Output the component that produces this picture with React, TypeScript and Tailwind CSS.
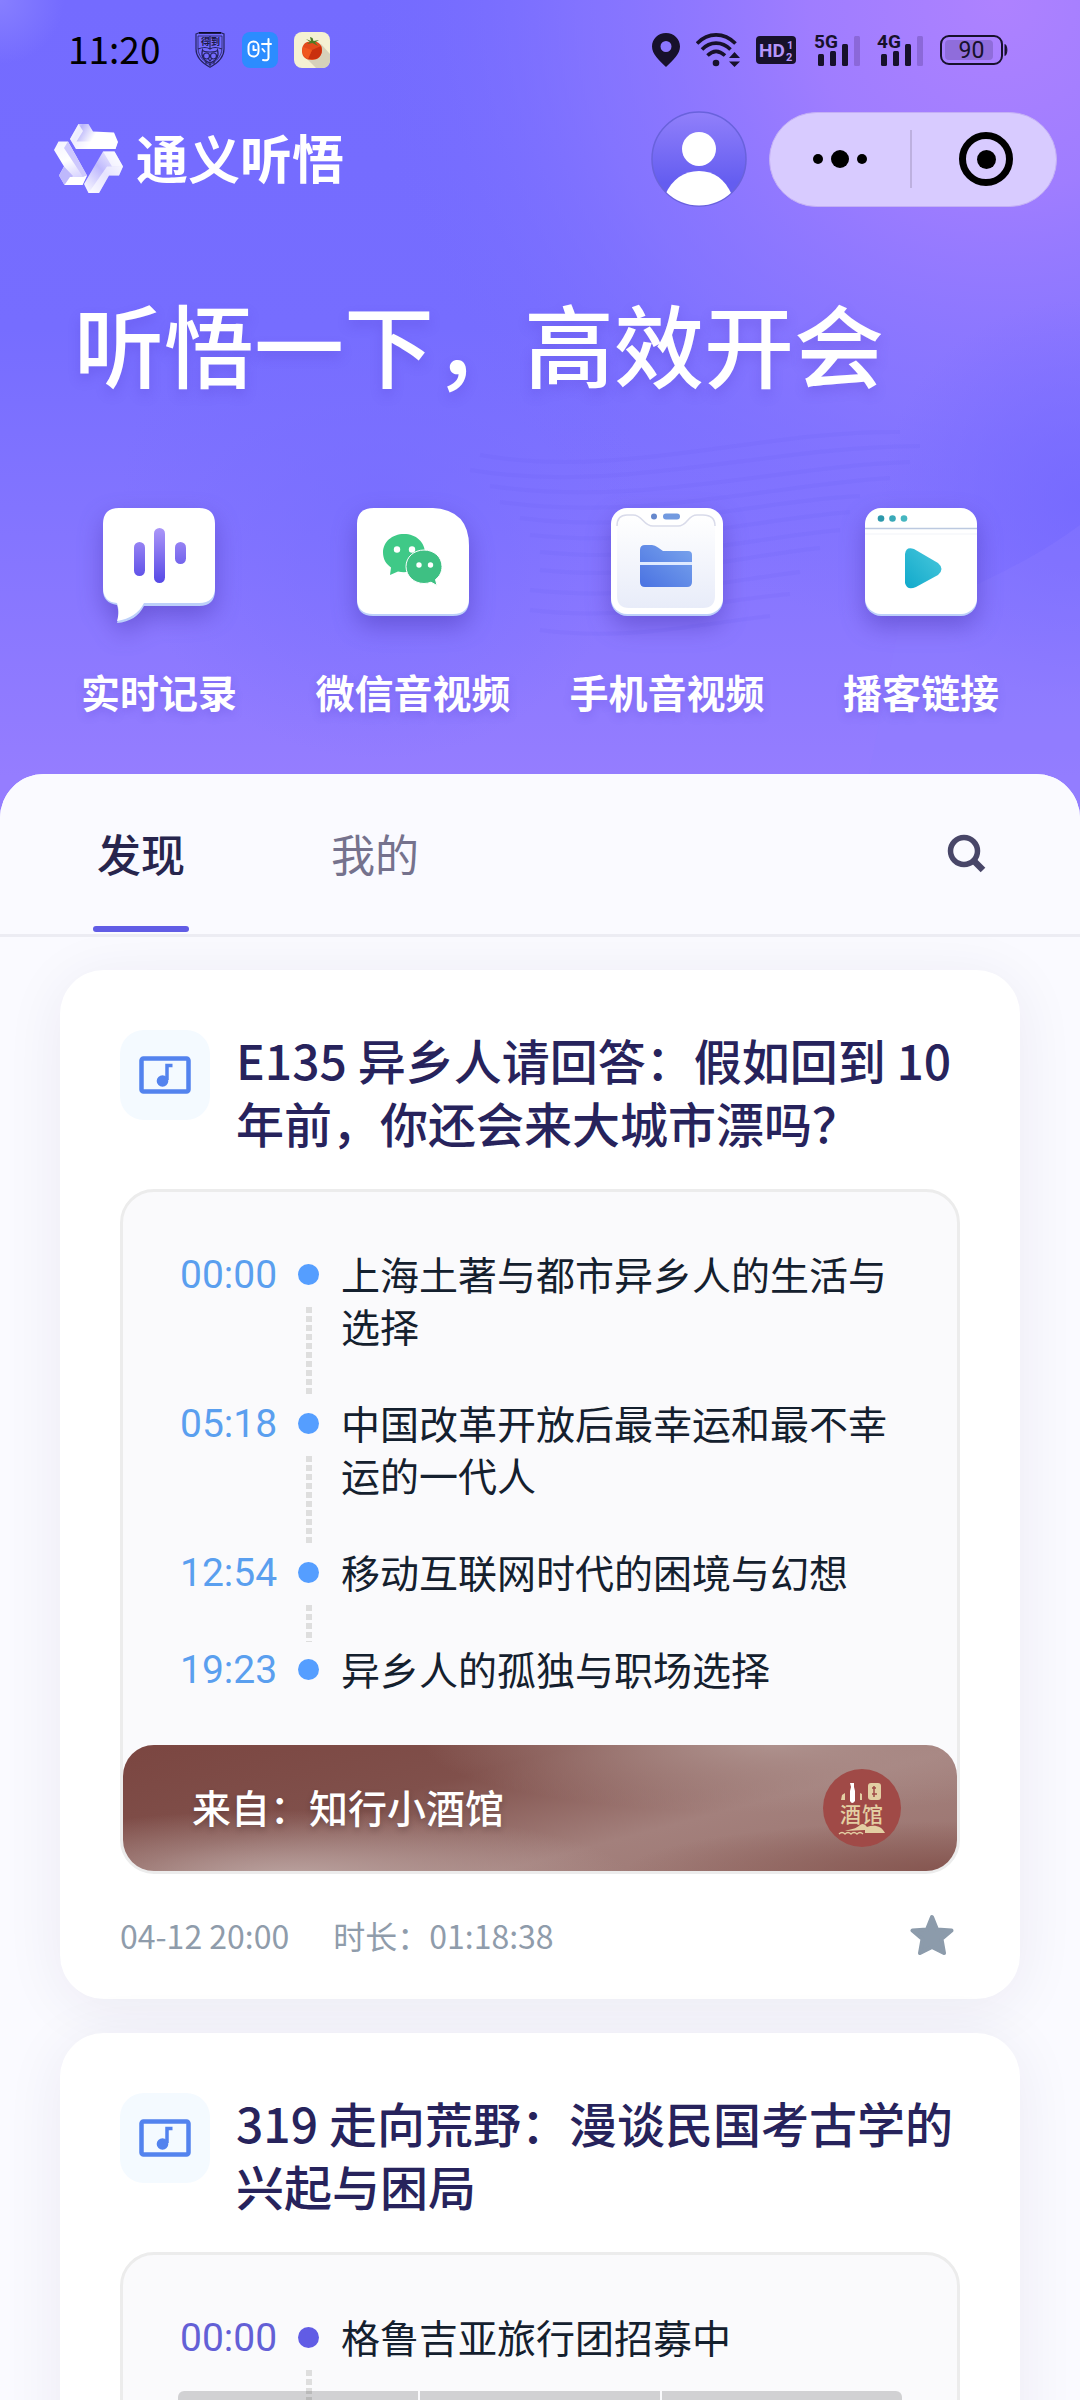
import React, { useState } from 'react';

interface Chapter {
  time: string;
  title: string;
}

interface Episode {
  id: string;
  title: string;
  accent: 'blue' | 'violet';
  chapters: Chapter[];
  source?: string;
  date?: string;
  duration?: string;
}

const episodes: Episode[] = [
  {
    id: 'e135',
    title: 'E135 异乡人请回答：假如回到 10 年前，你还会来大城市漂吗？',
    accent: 'blue',
    chapters: [
      { time: '00:00', title: '上海土著与都市异乡人的生活与选择' },
      { time: '05:18', title: '中国改革开放后最幸运和最不幸运的一代人' },
      { time: '12:54', title: '移动互联网时代的困境与幻想' },
      { time: '19:23', title: '异乡人的孤独与职场选择' },
    ],
    source: '知行小酒馆',
    date: '04-12 20:00',
    duration: '01:18:38',
  },
  {
    id: 'e319',
    title: '319 走向荒野：漫谈民国考古学的兴起与困局',
    accent: 'violet',
    chapters: [{ time: '00:00', title: '格鲁吉亚旅行团招募中' }],
  },
];

const accents = {
  blue: { text: 'text-[#5a9fef]', dot: 'bg-[#559eff]' },
  violet: { text: 'text-[#6360d6]', dot: 'bg-[#615ce5]' },
};

function ShieldIcon() {
  return (
    <svg viewBox="0 0 32 36" className="h-9 w-8" fill="none" stroke="#25235f" strokeWidth="1.2">
      <path d="M2 2 L5 .8 H27 L30 2 V17 C30 27 22 32 16 35.2 C10 32 2 27 2 17 Z" />
      <path d="M4 4 H28 V16 C28 25 21 30 16 32.8 C11 30 4 25 4 16 Z" strokeWidth=".8" />
      <path d="M5 .8 H27" stroke="#0c0b2a" strokeWidth="1.8" />
      <path d="M4 17 C9 15 13 15 16 17 C19 15 23 15 28 17 M16 4 V17" />
      <text x="7" y="13" fontSize="9" fontWeight="700" fill="#1b1947" stroke="none" fontFamily="Noto Sans CJK SC">得</text>
      <text x="17" y="13" fontSize="9" fontWeight="700" fill="#1b1947" stroke="none" fontFamily="Noto Sans CJK SC">到</text>
      <path d="M8.500 18 C9 20 12 20 16 20 C20 20 23 20 23.500 18 C25 23 24 28 16 31 C8 28 7 23 8.500 18 Z" />
      <circle cx="12.500" cy="24" r="3" />
      <circle cx="19.500" cy="24" r="3" />
      <path d="M14.500 27 L16 29 L17.500 27 M12 29 V32 M16 30 V34 M20 29 V32" />
    </svg>
  );
}

function ClockAppIcon() {
  return (
    <svg viewBox="0 0 36 36" className="size-9" fill="none" stroke="#fff" strokeWidth="2" strokeLinecap="round" strokeLinejoin="round">
      <rect width="36" height="36" rx="8" fill="#2c8cff" stroke="none" />
      <rect x="6.500" y="9.500" width="10" height="15" rx="5" />
      <path d="M11.500 14 V18 H14 M20 12 H29 M26.500 7 V26 C26.500 28 25 28.500 21 28 M20.500 17 L22.500 19.500" />
    </svg>
  );
}

function TomatoIcon() {
  return (
    <svg viewBox="0 0 36 36" className="size-9">
      <rect width="36" height="36" rx="8" fill="#f5f1d3" />
      <path d="M27 12 L36 22 V28 C36 33 33 36 28 36 H22 L11 25 Z" fill="#d6d1ba" />
      <path d="M8 19 C8 12 12 9 18 9.500 C24 9 28 12 28 18 C28 24 24 28 18 28 C12 28 8 25 8 19 Z" fill="#e24a1b" />
      <path d="M18 18 L27 14 C29 20 27 25 22 27 L14 27 Z" fill="#c9300f" />
      <path d="M9 15 L18 18 L14 27 C10 25 7 20 9 15 Z" fill="#f0571f" />
      <path d="M12 7 L17 9 L16 5 L18.500 6 L19.500 9 L25 8 L21 10.500 L24 14 L18.500 11 L13 12 L16 10 Z" fill="#4c7a24" />
    </svg>
  );
}

function PinIcon() {
  return (
    <svg viewBox="0 0 28 34" className="h-[34px] w-7">
      <path fillRule="evenodd" d="M14 0 C6 0 0 6 0 13.500 C0 21 7 27 14 34 C21 27 28 21 28 13.500 C28 6 22 0 14 0 Z M14 8 A5.500 5.500 0 1 1 14 19 A5.500 5.500 0 1 1 14 8 Z" fill="#17112b" />
    </svg>
  );
}

function WifiIcon() {
  return (
    <svg viewBox="0 0 44 34" className="h-[34px] w-11" fill="none" stroke="#17112b" strokeWidth="3.600">
      <path d="M1 10.500 C12 -1 28 -1 39.500 10.500" />
      <path d="M6 16.500 C14 8 26 8 34.500 16.500" />
      <path d="M11.500 22.500 C17 17 23 17 29 22.500" />
      <circle cx="20" cy="30" r="3.300" fill="#17112b" stroke="none" />
      <path d="M33 25 L38.500 19 L44 25 Z M33 28.500 L38.500 34 L44 28.500 Z" fill="#17112b" stroke="none" />
    </svg>
  );
}

function HdIcon() {
  return (
    <svg viewBox="0 0 42 28" className="h-7 w-[42px]" fontFamily="Roboto" fontWeight="700" fill="#b596fa">
      <rect width="40" height="28" rx="4" fill="#17112b" />
      <text x="3" y="21" fontSize="19">HD</text>
      <text x="31" y="13" fontSize="11">1</text>
      <text x="30" y="25" fontSize="11">2</text>
    </svg>
  );
}

function SignalIcon({ label }: { label: string }) {
  return (
    <svg viewBox="0 -4 47 42" className="h-[42px] w-[47px]" fill="#17112b">
      <text x="0" y="15" fontSize="19" fontWeight="700" fontFamily="Roboto">{label}</text>
      <rect x="4" y="21" width="6" height="12" rx="1.500" />
      <rect x="16" y="18" width="6" height="15" rx="1.500" />
      <rect x="28" y="11" width="6" height="22" rx="1.500" />
      <rect x="40" y="3" width="6" height="30" rx="1.500" fill="#8b68d9" />
    </svg>
  );
}

function BatteryIcon() {
  return (
    <svg viewBox="0 0 68 30" className="h-[30px] w-[68px]">
      <rect x="1" y="1" width="61" height="28" rx="8" fill="none" stroke="#17112b" strokeWidth="2" />
      <rect x="5" y="5" width="48" height="20" rx="4" fill="#8f6ddb" />
      <path d="M65 9.500 C67.500 11 67.500 19 65 20.500 Z" fill="#17112b" stroke="#17112b" />
      <text x="31.500" y="23" fontSize="23" textAnchor="middle" fill="#17112b" fontFamily="Roboto">90</text>
    </svg>
  );
}

function BrandLogo() {
  return (
    <svg viewBox="0 0 70 70" className="size-[70px]">
      <defs>
        <linearGradient id="faceTop" x1="0" y1="0" x2="1" y2=".3">
          <stop offset="0" stopColor="#fff" />
          <stop offset=".25" stopColor="#b9b4fb" />
          <stop offset=".6" stopColor="#fff" />
        </linearGradient>
        <linearGradient id="faceLeft" x1="0" y1="0" x2=".3" y2="1">
          <stop offset="0" stopColor="#f4f3ff" />
          <stop offset=".5" stopColor="#fff" />
          <stop offset="1" stopColor="#d4d0ff" />
        </linearGradient>
        <linearGradient id="faceRight" x1="1" y1="0" x2="0" y2="1">
          <stop offset="0" stopColor="#fff" />
          <stop offset=".5" stopColor="#bfb9fd" />
          <stop offset="1" stopColor="#fff" />
        </linearGradient>
      </defs>
      <path d="M24.500 0 H34.500 L39 7.500 L60 8.500 L64 18 L61.500 25 H22 L16 15 Z" fill="url(#faceTop)" />
      <path d="M16 15 L24.500 0 L29 7 L22.500 17.500 H63.500 L61.500 25 H22 Z" fill="#fff" fillOpacity=".75" />
      <path d="M4.500 17.500 H14 L33 51.500 L28.500 61 H10.500 L5 51.500 L10 42.500 L0 26 Z" fill="url(#faceLeft)" />
      <path d="M14 17.500 L33 51.500 L29 53 L10 24 Z" fill="#cdc8fe" />
      <path d="M10 42.500 L19 52 L10.500 61 L5 51.500 Z" fill="#beb8fc" />
      <path d="M16 53 H29 L33 51.500 L28.500 61 H10.500 Z" fill="#fff" />
      <path d="M49 27.500 H60.500 L69 42.500 L65 51.500 H55 L45 69 H34.500 L30 60 Z" fill="url(#faceRight)" />
      <path d="M60.500 27.500 L69 42.500 H58 L49 27.500 Z" fill="#fff" fillOpacity=".7" />
      <path d="M69 42.500 L65 51.500 H55 L45 69 H34.500 L53 42.500 Z" fill="#fff" fillOpacity=".6" />
    </svg>
  );
}

function AvatarIcon() {
  return (
    <svg viewBox="0 0 96 96" className="size-24">
      <defs>
        <linearGradient id="avatarBg" x1="0" y1="0" x2="0" y2="1">
          <stop offset="0" stopColor="#9180fb" />
          <stop offset=".75" stopColor="#645df0" />
        </linearGradient>
        <clipPath id="avatarClip">
          <circle cx="48" cy="48" r="46.500" />
        </clipPath>
      </defs>
      <circle cx="48" cy="48" r="47" fill="url(#avatarBg)" stroke="#6962dc" strokeWidth="1.500" />
      <circle cx="48" cy="38" r="17" fill="#fff" />
      <path d="M14 84 C21 68 33 60 48 60 C63 60 74 68 81 84 V100 H14 Z" fill="#fff" clipPath="url(#avatarClip)" />
    </svg>
  );
}

const tileShadow = 'overflow-visible drop-shadow-[0_10px_12px_rgba(60,40,160,0.4)]';

function RecordTile() {
  return (
    <svg viewBox="0 0 112 120" className={`h-[120px] w-28 ${tileShadow}`}>
      <defs>
        <linearGradient id="bars" gradientUnits="userSpaceOnUse" x1="0" y1="20" x2="0" y2="76">
          <stop offset="0" stopColor="#ab96f8" />
          <stop offset="1" stopColor="#5548e6" />
        </linearGradient>
      </defs>
      <path d="M16 3 H96 Q112 3 112 19 V82 Q112 98 96 98 H41 C36 108 27 114 14 115 C16 109 16 104 14 97 Q0 95 0 82 V19 Q0 3 16 3 Z" fill="#bdd0fa" />
      <path d="M16 0 H96 Q112 0 112 16 V79 Q112 95 96 95 H41 C36 105 27 111 14 113 C16 106 16 101 14 95 Q0 94 0 79 V16 Q0 0 16 0 Z" fill="#fff" />
      <g fill="url(#bars)">
        <rect x="31" y="34" width="11" height="34" rx="5.500" />
        <rect x="51" y="20" width="11" height="55" rx="5.500" />
        <rect x="72" y="34" width="11" height="22" rx="5.500" />
      </g>
    </svg>
  );
}

function WechatTile() {
  return (
    <svg viewBox="0 0 112 120" className={`h-[120px] w-28 ${tileShadow}`}>
      <path d="M17 3 H76 Q112 5 112 42 V92 Q112 108 96 108 H16 Q0 108 0 92 V19 Q0 3 17 3 Z" fill="#bdd0fa" />
      <path d="M17 0 H76 Q112 2 112 38 V90 Q112 106 96 106 H16 Q0 106 0 90 V16 Q0 0 17 0 Z" fill="#fff" />
      <path d="M47 26 C35 26 26 34 26 44.500 C26 51 29 56 34 59.500 L33 67 L41 63.500 C43 64 45 64.200 47 64.200 C59 64 68 55 68 45 C68 34 59 26 47 26 Z" fill="#3fc987" />
      <path d="M67 42 C57 42 49 49 49 58.500 C49 68 57 75.500 67 75.500 C69.500 75.500 72 75 74 74.200 L80 77.500 L78.500 71.500 C82.500 68.500 85 64 85 58.500 C85 49 77 42 67 42 Z" fill="#3ec083" stroke="#fff" strokeWidth="1" />
      <g fill="#fff">
        <circle cx="40" cy="41.500" r="3.200" />
        <circle cx="55" cy="41.500" r="3.200" />
        <circle cx="62" cy="57" r="2.700" />
        <circle cx="73.500" cy="57" r="2.700" />
      </g>
    </svg>
  );
}

function PhoneTile() {
  return (
    <svg viewBox="0 0 112 120" className={`h-[120px] w-28 ${tileShadow}`}>
      <defs>
        <linearGradient id="phoneScreen" x1="0" y1="0" x2="0" y2="1">
          <stop offset="0" stopColor="#fff" />
          <stop offset="1" stopColor="#e8ecf9" />
        </linearGradient>
        <linearGradient id="folder" x1="0" y1="1" x2="1" y2="0">
          <stop offset="0" stopColor="#4a72e2" />
          <stop offset="1" stopColor="#79a4ec" />
        </linearGradient>
      </defs>
      <rect y="3" width="112" height="105" rx="16" fill="#bdd0fa" />
      <rect width="112" height="106" rx="16" fill="#fff" />
      <path d="M16 7 H22 C32 7 32 18 42 18 H67 C77 18 76 7 86 7 H92 Q104 7 104 19 V88 Q104 100 92 100 H18 Q6 100 6 88 V18 Q6 7 16 7 Z" fill="url(#phoneScreen)" />
      <path d="M6 18 Q6 7 16 7 H22 C32 7 32 18 42 18 H67 C77 18 76 7 86 7 H92 Q104 7 104 18" fill="none" stroke="#d9dbea" strokeWidth="1.500" />
      <circle cx="43" cy="8.500" r="3" fill="#6688cc" />
      <rect x="52" y="5.500" width="17" height="6" rx="3" fill="#729ae0" />
      <path d="M29 42 Q29 37 34 37 H41 Q44 37 47 39.500 L52 43 H77 Q81 43 81 47 V74 Q81 79 76 79 H34 Q29 79 29 74 Z" fill="url(#folder)" />
      <rect x="29" y="54" width="52" height="3" fill="#dfeaff" />
    </svg>
  );
}

function PodcastTile() {
  return (
    <svg viewBox="0 0 112 120" className={`h-[120px] w-28 ${tileShadow}`}>
      <defs>
        <linearGradient id="play" x1="0" y1="1" x2="1" y2="0">
          <stop offset="0" stopColor="#10a9cb" />
          <stop offset="1" stopColor="#4bc8dc" />
        </linearGradient>
      </defs>
      <rect y="3" width="112" height="105" rx="16" fill="#bdd0fa" />
      <rect width="112" height="106" rx="16" fill="#fff" />
      <path d="M0 20.500 H112" stroke="#bcc9e0" strokeWidth="1.500" />
      <path d="M0 26 H112" stroke="#f1f3f8" strokeWidth="1" />
      <circle cx="16" cy="10.500" r="3.300" fill="#2c98ab" />
      <circle cx="27.500" cy="10.500" r="3.300" fill="#39a9b8" />
      <circle cx="39" cy="10.500" r="3.300" fill="#45b6c0" />
      <path d="M40 46 Q41 38 49 41 L73 55 Q80 61 73 67 L51 79 Q42 83 40 75 Z" fill="url(#play)" />
    </svg>
  );
}

function MusicIcon() {
  return (
    <svg viewBox="0 0 52 38" className="h-[38px] w-[52px]" fill="none">
      <rect x="2.500" y="2.500" width="47" height="33" rx="2" stroke="#5383ee" strokeWidth="4.500" />
      <path d="M33.500 9.500 H28 V24" stroke="#5383ee" strokeWidth="3.500" />
      <circle cx="23.500" cy="25" r="5.800" fill="#5383ee" />
    </svg>
  );
}

function TavernLogo() {
  return (
    <svg viewBox="0 0 78 78" className="size-[78px]" fill="#e3cfa3">
      <circle cx="39" cy="39" r="39" fill="#a04a47" />
      <path d="M27 14 H31 V18 L32 22 V32 Q29 36 27 32 V22 L28 18 Z" fill="#fff" />
      <path d="M19 26 L22 24 V31 H18 Z M37 24 L39 25 V31 H37 Z" />
      <rect x="45" y="14" width="13" height="17" rx="3" />
      <path d="M49 19 H53 M49 25 H54 M51 17 V28" stroke="#a04a47" strokeWidth="1.500" />
      <text x="17" y="53" fontSize="21" fontWeight="500" fontFamily="Noto Sans CJK SC">酒</text>
      <text x="39" y="53" fontSize="21" fontWeight="500" fontFamily="Noto Sans CJK SC">馆</text>
      <path d="M22 62 C28 60 33 60 37 56 Q41 53 44 58 C51 55 59 57 62 64 H42 V61 Z" />
      <path d="M16 65 Q19 62 22 65 Q25 62 28 65 Q31 62 34 65 Q37 62 40 65" fill="none" stroke="#e3cfa3" strokeWidth="1.300" />
    </svg>
  );
}

function HeroBackground() {
  return (
    <svg className="absolute inset-0 size-full" viewBox="0 0 1080 818" preserveAspectRatio="none" aria-hidden="true">
      <defs>
        <linearGradient id="heroBase" x1="0" y1="0" x2="0" y2="1">
          <stop offset="0" stopColor="#746bff" />
          <stop offset=".4" stopColor="#766dff" />
          <stop offset=".62" stopColor="#8274ff" />
          <stop offset=".95" stopColor="#957dff" />
        </linearGradient>
        <radialGradient id="heroTopRight" gradientUnits="userSpaceOnUse" cx="1000" cy="0" r="640">
          <stop offset="0" stopColor="#ae82ff" />
          <stop offset=".3" stopColor="#a47fff" stopOpacity=".9" />
          <stop offset=".65" stopColor="#8d79ff" stopOpacity=".6" />
          <stop offset="1" stopColor="#766dff" stopOpacity="0" />
        </radialGradient>
        <radialGradient id="heroMid" gradientUnits="userSpaceOnUse" cx="380" cy="500" r="260">
          <stop offset="0" stopColor="#766dff" stopOpacity=".7" />
          <stop offset="1" stopColor="#766dff" stopOpacity="0" />
        </radialGradient>
        <radialGradient id="heroRight" gradientUnits="userSpaceOnUse" cx="1080" cy="500" r="200">
          <stop offset="0" stopColor="#7468ff" stopOpacity=".8" />
          <stop offset="1" stopColor="#7468ff" stopOpacity="0" />
        </radialGradient>
        <radialGradient id="heroCorner" gradientUnits="userSpaceOnUse" cx="0" cy="0" r="64">
          <stop offset="0" stopColor="#877fff" />
          <stop offset="1" stopColor="#877fff" stopOpacity="0" />
        </radialGradient>
      </defs>
      <rect width="1080" height="818" fill="url(#heroBase)" />
      <rect width="1080" height="818" fill="url(#heroTopRight)" />
      <rect width="1080" height="818" fill="url(#heroMid)" />
      <rect width="1080" height="818" fill="url(#heroRight)" />
      <rect width="80" height="80" fill="url(#heroCorner)" />
      <path d="M1080 525 C1040 555 990 580 900 620 L860 818 H1080 Z" fill="#8f7dff" fillOpacity=".3" />
      <g fill="none" stroke="#6458f0" strokeOpacity=".1" strokeWidth="4">
        <path d="M480 455 C620 480 760 430 900 432" />
        <path d="M470 470 C620 495 760 447 920 446" />
        <path d="M490 486 C640 508 780 466 910 462" />
        <path d="M500 502 C640 522 780 484 890 478" />
        <path d="M520 518 C650 535 760 500 860 496" />
        <path d="M530 535 C660 548 750 520 850 512" />
        <path d="M540 552 C660 564 750 538 840 530" />
        <path d="M540 570 C650 582 740 556 820 548" />
        <path d="M530 590 C640 602 730 580 800 572" />
        <path d="M530 610 C630 622 720 600 790 594" />
        <path d="M540 630 C630 642 710 622 770 616" />
      </g>
    </svg>
  );
}

const shortcuts = [
  { label: '实时记录', Icon: RecordTile },
  { label: '微信音视频', Icon: WechatTile },
  { label: '手机音视频', Icon: PhoneTile },
  { label: '播客链接', Icon: PodcastTile },
];

function StatusBar() {
  return (
    <div className="flex h-9 items-center pr-[72px] pl-[68px]">
      <time className="mr-[34px] pb-1 text-[37px] leading-9 text-black">11:20</time>
      <div className="flex items-center gap-4">
        <ShieldIcon />
        <ClockAppIcon />
        <TomatoIcon />
      </div>
      <div className="ml-auto flex items-center gap-4">
        <PinIcon />
        <WifiIcon />
        <HdIcon />
        <SignalIcon label="5G" />
        <SignalIcon label="4G" />
        <BatteryIcon />
      </div>
    </div>
  );
}

function Header() {
  return (
    <header className="relative shrink-0 pt-8 pb-[101px] text-white">
      <HeroBackground />
      <div className="relative">
        <StatusBar />
        <div className="mt-[43px] flex h-24 items-center pr-[23px] pl-[54px]">
          <BrandLogo />
          <span className="ml-3 pb-1 text-[52px] leading-none font-bold">通义听悟</span>
          <button className="ml-auto rounded-full" aria-label="个人中心">
            <AvatarIcon />
          </button>
          <div className="ml-[22px] flex h-[95px] w-72 items-center rounded-full border border-[#c4b0f5] bg-[#d8cbff]">
            <button className="flex flex-1 items-center justify-center gap-2" aria-label="更多">
              <span className="size-2.5 rounded-full bg-black" />
              <span className="size-[18px] rounded-full bg-black" />
              <span className="size-2.5 rounded-full bg-black" />
            </button>
            <span className="h-[58px] w-0.5 bg-[#bdb0df]" />
            <button className="flex flex-1 items-center justify-center pl-1" aria-label="关闭">
              <span className="flex size-[54px] items-center justify-center rounded-full border-[7px] border-black">
                <span className="size-[19px] rounded-full bg-black" />
              </span>
            </button>
          </div>
        </div>

        <h1 className="mt-[81px] pl-[74px] text-[90px] leading-[108px] font-medium [text-shadow:0_6px_12px_rgba(80,60,200,0.25)]">
          听悟一下，高效开会
        </h1>

        <nav className="mt-28 grid grid-cols-4 px-8">
          {shortcuts.map(({ label, Icon }) => (
            <button key={label} className="flex flex-col items-center">
              <Icon />
              <span className="mt-[37px] text-[39px] leading-[52px] font-bold whitespace-nowrap [text-shadow:0_4px_8px_rgba(80,60,200,0.25)]">
                {label}
              </span>
            </button>
          ))}
        </nav>
      </div>
    </header>
  );
}

function EpisodeCard({ episode }: { episode: Episode }) {
  const [starred, setStarred] = useState(false);
  const accent = accents[episode.accent];

  return (
    <article className="shrink-0 rounded-[44px] bg-white px-[60px] pt-[58px] pb-[43px] shadow-[0_8px_60px_rgba(40,30,90,0.07)]">
      <div className="flex items-start">
        <div className="mt-0.5 flex size-[90px] shrink-0 items-center justify-center rounded-3xl bg-[#f4faff]">
          <MusicIcon />
        </div>
        <h2 className="ml-[26px] text-[48px] leading-[63px] font-medium text-[#27235c]">{episode.title}</h2>
      </div>

      <div className="mt-[35px] rounded-[34px] border-[3px] border-[#ececec] bg-[#fafafc]">
        <ol className="pt-[55px] pr-[56px] pb-[50px] pl-[57px]">
          {episode.chapters.map((chapter, idx) => {
            const isLast = episode.source !== undefined && idx === episode.chapters.length - 1;
            return (
              <li key={chapter.time} className="flex">
                <span className={`w-[98px] shrink-0 pt-1 font-[Roboto] text-[39px] leading-[49px] ${accent.text}`}>{chapter.time}</span>
                <div className="ml-5 flex w-[21px] shrink-0 flex-col items-center">
                  <span className={`mt-[17px] size-[21px] rounded-full ${accent.dot}`} />
                  {!isLast && (
                    <span className="mt-[22px] w-1.5 flex-1 bg-[repeating-linear-gradient(to_bottom,#dedede_0px,#dedede_6px,transparent_6px,transparent_9px)]" />
                  )}
                </div>
                <p className={`ml-[22px] flex-1 text-[39px] leading-[52px] text-[#14202e] ${isLast ? '' : 'pb-[45px]'}`}>{chapter.title}</p>
              </li>
            );
          })}
        </ol>
        {episode.source && (
          <div className="flex h-[126px] items-center justify-between rounded-[31px] bg-[radial-gradient(ellipse_at_78%_0%,#ae918d_0%,transparent_38%),radial-gradient(ellipse_at_20%_105%,#bba3a0_0%,transparent_36%),radial-gradient(ellipse_at_100%_100%,#85554f_0%,transparent_28%),linear-gradient(165deg,#7b4641_0%,#80504b_35%,#a3807c_65%,#9b746f_100%)] pr-14 pl-[69px]">
            <span className="pb-1 text-[39px] leading-[52px] font-medium text-white [text-shadow:0_3px_6px_rgba(0,0,0,0.2)]">来自：{episode.source}</span>
            <TavernLogo />
          </div>
        )}
      </div>

      {episode.date && (
        <div className="mt-10 flex h-[42px] items-center text-[32px] text-[#8f9cab]">
          <time>{episode.date}</time>
          <span className="ml-11">时长：{episode.duration}</span>
          <button className="mr-1.5 ml-auto" aria-label="收藏" aria-pressed={starred} onClick={() => setStarred(!starred)}>
            <svg viewBox="0 0 44 42" className="h-[42px] w-11" fill="#8c9bab" stroke="#8c9bab" strokeWidth="4" strokeLinejoin="round">
              <path d="M22 3 L27 15.500 L41.500 16.500 L31.500 25 L34 39 L22 33 L10 39 L12.500 25 L2.500 16.500 L17 15.500 Z" />
            </svg>
          </button>
        </div>
      )}
    </article>
  );
}

export default function App() {
  const [tab, setTab] = useState('发现');

  return (
    <div lang="zh-CN" className="relative flex h-screen flex-col overflow-hidden bg-[#fafaff] font-['Noto_Sans_CJK_SC',sans-serif]">
      <Header />

      <main className="relative -mt-11 flex min-h-0 flex-1 flex-col overflow-hidden rounded-t-[44px] bg-[#fafaff]">
        <div className="relative z-10 flex shrink-0 items-center border-b-[3px] border-[#ececf3] bg-[#fafaff] pr-[94px] pb-0.5 pl-[93px]">
          <div role="tablist" className="flex gap-[138px]">
            {['发现', '我的'].map((name) => (
              <button
                key={name}
                role="tab"
                aria-selected={tab === name}
                onClick={() => setTab(name)}
                className={`relative h-[158px] w-24 text-[44px] whitespace-nowrap ${tab === name ? 'font-medium text-[#27254d]' : 'text-[#75728d]'}`}
              >
                {name}
                {tab === name && <span className="absolute inset-x-0 bottom-0 h-1.5 rounded-full bg-[#615ce5]" />}
              </button>
            ))}
          </div>
          <button className="ml-auto" aria-label="搜索">
            <svg viewBox="0 0 40 40" className="size-10" fill="none" stroke="#484668" strokeWidth="5.500">
              <circle cx="18" cy="18" r="13.500" />
              <path d="M27.500 27.500 L37 37" strokeWidth="6.500" />
            </svg>
          </button>
        </div>

        <section className="flex flex-1 flex-col gap-[34px] overflow-y-auto px-[60px] pt-[33px] [scrollbar-width:none]">
          {episodes.map((episode) => (
            <EpisodeCard key={episode.id} episode={episode} />
          ))}
        </section>
      </main>

      {/* Top edge of the system gesture keys */}
      <div className="absolute inset-x-[178px] bottom-0 grid h-[9px] grid-cols-3 gap-0.5 overflow-hidden rounded-t-md">
        <span className="bg-black/16" />
        <span className="bg-black/16" />
        <span className="bg-black/16" />
      </div>
    </div>
  );
}
